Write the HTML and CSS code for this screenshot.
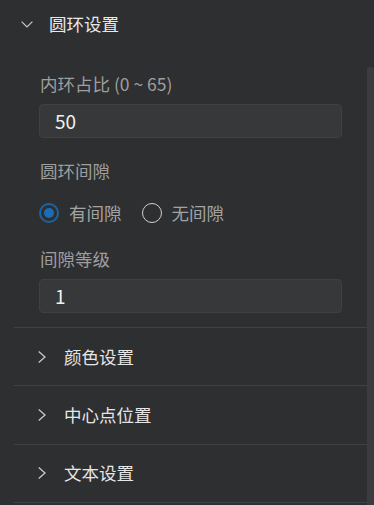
FILE: index.html
```html
<!DOCTYPE html>
<html lang="zh-CN">
<head>
<meta charset="utf-8">
<link rel="stylesheet" href="styles.css">
</head>
<body>
<div class="panel">
  <div class="panel-header">
    <svg class="chev-down" width="12" height="7" viewBox="0 0 12 7"><path d="M0.6 0.6 L6 6 L11.4 0.6" fill="none" stroke="#c8c8c8" stroke-width="1.2"/></svg>
    <span class="panel-title">圆环设置</span>
  </div>
  <div class="panel-body">
    <div class="content">
      <div class="form">
        <div class="label">内环占比 (0 ~ 65)</div>
        <div class="input">50</div>
        <div class="label gap-top">圆环间隙</div>
        <div class="radios">
          <label class="radio checked"><span class="dot"></span><span class="radio-text">有间隙</span></label>
          <label class="radio"><span class="dot"></span><span class="radio-text">无间隙</span></label>
        </div>
        <div class="label gap-top2">间隙等级</div>
        <div class="input">1</div>
      </div>
      <div class="item"><svg class="chev-right" width="8" height="12" viewBox="0 0 8 12"><path d="M0.7 0.6 L7 6 L0.7 11.4" fill="none" stroke="#c8c8c8" stroke-width="1.3"/></svg><span class="item-title">颜色设置</span></div>
      <div class="item"><svg class="chev-right" width="8" height="12" viewBox="0 0 8 12"><path d="M0.7 0.6 L7 6 L0.7 11.4" fill="none" stroke="#c8c8c8" stroke-width="1.3"/></svg><span class="item-title">中心点位置</span></div>
      <div class="item"><svg class="chev-right" width="8" height="12" viewBox="0 0 8 12"><path d="M0.7 0.6 L7 6 L0.7 11.4" fill="none" stroke="#c8c8c8" stroke-width="1.3"/></svg><span class="item-title">文本设置</span></div>
    </div>
    <div class="scrollbar"><div class="thumb"></div></div>
  </div>
</div>
</body>
</html>
```
FILE: styles.css
```css
html, body {
  margin: 0;
  padding: 0;
  background: #2e2f31;
  height: 100%;
  overflow: hidden;
}
body {
  font-family: "Noto Sans CJK SC", "Noto Sans", sans-serif;
  color: #e6e6e6;
}
.panel {
  display: flex;
  flex-direction: column;
  height: 505px;
}
.panel-header {
  height: 48px;
  display: flex;
  align-items: center;
  padding-left: 21px;
  flex-shrink: 0;
}
.chev-down {
  display: block;
  margin-right: 16px;
}
.panel-title {
  font-size: 17.5px;
  line-height: 24px;
  color: #e8e8e8;
}
.panel-body {
  flex: 1;
  display: flex;
  min-height: 0;
}
.content {
  flex: 1;
  padding-left: 14px;
}
.scrollbar {
  width: 7px;
  padding-top: 19px;
  display: flex;
  flex-direction: column;
}
.thumb {
  flex: 1;
  background: #3b3c3e;
  border-radius: 3px 3px 0 0;
}
.form {
  padding: 24px 25px 14px 25px;
}
.label {
  font-size: 17.5px;
  line-height: 24px;
  color: #9e9e9e;
  margin-bottom: 8px;
  padding-left: 1px;
}
.gap-top { margin-top: 21px; margin-bottom: 18px; }
.gap-top2 { margin-top: 22px; }
.input {
  box-sizing: border-box;
  height: 34px;
  background: #37383a;
  border: 1px solid #3f4042;
  border-radius: 4px;
  padding-left: 15px;
  font-size: 19px;
  line-height: 32px;
  color: #f0f0f0;
}
.radios {
  display: flex;
  align-items: center;
  height: 24px;
}
.radio {
  display: flex;
  align-items: center;
  margin-right: 20px;
}
.dot {
  box-sizing: border-box;
  width: 20px;
  height: 20px;
  border-radius: 50%;
  border: 1.5px solid #d0d0d0;
  margin-right: 10px;
  display: flex;
  align-items: center;
  justify-content: center;
}
.radio.checked .dot {
  border: 2px solid #1b64a3;
}
.radio.checked .dot::after {
  content: "";
  width: 10px;
  height: 10px;
  border-radius: 50%;
  background: #1d6db5;
}
.radio-text {
  font-size: 17.5px;
  line-height: 24px;
  color: #a3a3a3;
}
.item {
  box-sizing: border-box;
  height: 58.4px;
  border-top: 1px solid #404143;
  display: flex;
  align-items: center;
  padding-left: 24px;
}
.item:last-child {
  border-bottom: 1px solid #404143;
  height: 59.4px;
}
.chev-right {
  display: block;
  margin-right: 18px;
}
.item-title {
  font-size: 17.5px;
  line-height: 24px;
  color: #e6e6e6;
}
```
